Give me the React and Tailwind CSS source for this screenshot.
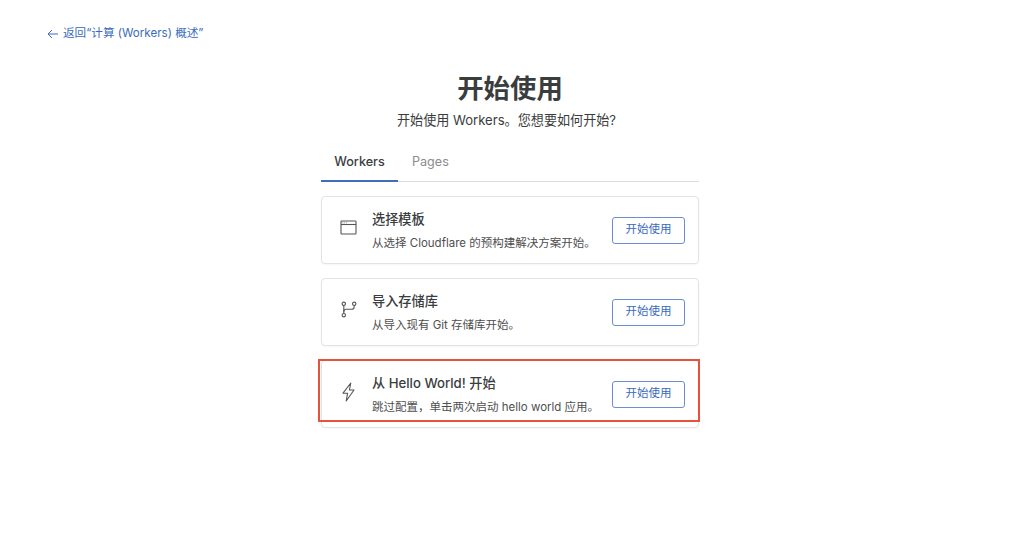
import React from "react";

const font = { fontFamily: '"Inter", "Noto Sans CJK SC", sans-serif' };

function WindowIcon() {
  return (
    <svg width="17" height="15" viewBox="0 0 17 15" fill="none" stroke="#555555" strokeWidth="1.1">
      <rect x="1" y="1" width="15" height="13" rx="0.8" />
      <path d="M1 4.5h15" />
      <path d="M2.6 2.8h.7M4.3 2.8h.7M6 2.8h.7" strokeWidth="0.8" />
    </svg>
  );
}

function BranchIcon() {
  return (
    <svg width="16" height="17" viewBox="0 0 16 17" fill="none" stroke="#555555" strokeWidth="1.1">
      <circle cx="2.8" cy="2.8" r="1.7" />
      <circle cx="2.8" cy="14.2" r="1.7" />
      <circle cx="13.2" cy="2.8" r="1.7" />
      <path d="M2.8 4.5v8" />
      <path d="M13.2 4.5v1.2a2.6 2.6 0 0 1-2.6 2.6H5.2a2.4 2.4 0 0 0-2.4 2.4" />
    </svg>
  );
}

function BoltIcon() {
  return (
    <svg width="13" height="20" viewBox="0 0 13 20" fill="none" stroke="#555555" strokeWidth="1.1" strokeLinejoin="round">
      <path d="M8.8 1 1 11.2h4.6L4.2 19l7.8-11H7.4L8.8 1Z" />
    </svg>
  );
}

function Card({ icon, title, desc }) {
  return (
    <div className="flex h-[68px] items-center rounded-[4px] border border-[#e3e3e3] bg-white shadow-[0_1px_2px_rgba(0,0,0,0.04)]">
      <div className="mb-[5px] flex w-[50px] shrink-0 justify-center pl-[3px]">{icon}</div>
      <div className="min-w-0 flex-1">
        <div className="text-[13.2px] font-medium leading-[20px] text-[#3a3d3e]">{title}</div>
        <div className="mt-[6px] text-[11.5px] leading-[17px] text-[#4f4f4f]">{desc}</div>
      </div>
      <button className="mr-[13px] flex h-[27px] w-[73px] items-center justify-center rounded-[3px] border border-[#6a8fd0] bg-white text-[11.5px] text-[#3a6bbd]">
        开始使用
      </button>
    </div>
  );
}

export default function App() {
  return (
    <div className="relative h-[551px] w-[1024px] overflow-hidden bg-white" style={font}>
      <div className="flex items-center pl-[47px] pt-[26px] text-[11.6px] leading-[15px] text-[#3a6bbd]">
        <svg width="12" height="10" viewBox="0 0 12 10" fill="none" stroke="#3a6bbd" strokeWidth="1" className="mr-[4px]">
          <path d="M11 5H1M5 1 1 5l4 4" />
        </svg>
        <span>返回“计算 (Workers) 概述”</span>
      </div>

      <div className="ml-[321px] mt-[29px] flex w-[378px] flex-col">
        <h1 className="text-center text-[26.4px] font-semibold leading-[36px] text-[#3a3d3e]">开始使用</h1>
        <p className="mt-[4px] pr-[7px] text-center text-[13.1px] leading-[20px] text-[#3a3d3e]">开始使用 Workers。您想要如何开始?</p>

        <div className="mt-[14px] flex h-[38px] border-b border-[#dedede] text-[12.6px]">
          <div className="flex h-[38px] w-[77px] items-center justify-center border-b-2 border-[#3f6fb8] font-medium text-[#3a3d3e]">
            Workers
          </div>
          <div className="ml-[14px] flex items-center text-[#8c8c8c]">Pages</div>
        </div>

        <div className="mt-[14px] flex flex-col gap-[14px]">
          <Card icon={<WindowIcon />} title="选择模板" desc="从选择 Cloudflare 的预构建解决方案开始。" />
          <Card icon={<BranchIcon />} title="导入存储库" desc="从导入现有 Git 存储库开始。" />
          <Card icon={<BoltIcon />} title="从 Hello World! 开始" desc="跳过配置，单击两次启动 hello world 应用。" />
        </div>
      </div>

      <div className="absolute left-[318px] top-[359px] h-[63px] w-[382px] border-2 border-[#e5533a]" />
    </div>
  );
}
